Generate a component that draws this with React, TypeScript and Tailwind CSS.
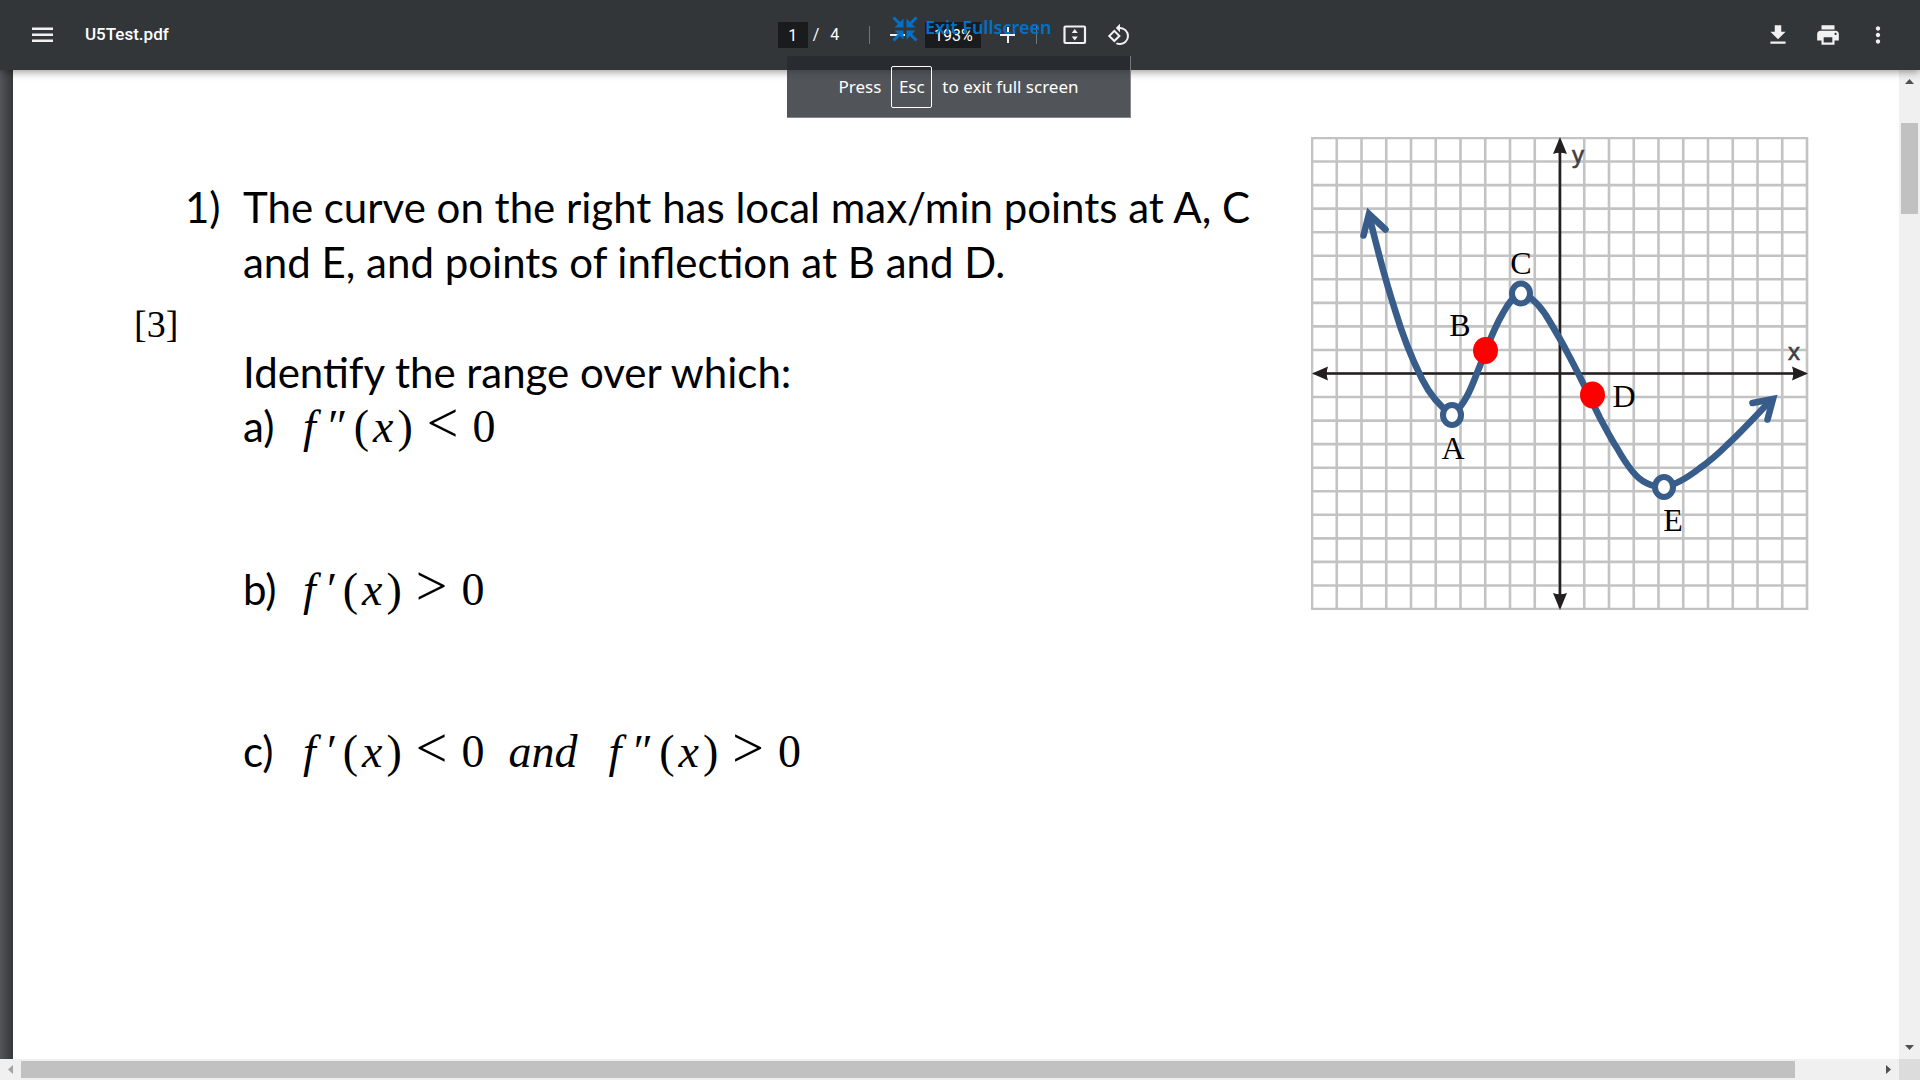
import React from 'react';

const icon = 'flex size-8 shrink-0 items-center justify-center text-[#f1f1f1]';
const math = "inline-block font-['Liberation_Serif',serif] text-[46px] leading-none";
const label = 'inline-block w-[60px]';

function Derivative({ order }: { order: 1 | 2 }) {
  return (
    <>
      <i>f</i>
      <i className={order === 1 ? 'inline-block w-[27px] text-center' : 'inline-block w-[38px] text-center'}>
        {order === 1 ? '′' : '″'}
      </i>
      (<i className="mx-1">x</i>)
    </>
  );
}

function Compare({ sign }: { sign: string }) {
  return (
    <>
      <span className="mx-[14px] text-[56px] leading-[46px]">{sign}</span>0
    </>
  );
}

function Graph() {
  const vs = Array.from({ length: 21 }, (_, i) => 1 + i * 24.75);
  const hs = Array.from({ length: 21 }, (_, i) => 1 + i * 23.55);
  const blue = '#385d8a';
  return (
    <svg viewBox="0 0 498 473" className="h-[473px] w-[498px] shrink-0" role="img" aria-label="Curve with points A to E">
      <g stroke="#c3c3c3" strokeWidth="2.6" fill="none">
        {vs.map((x) => <path key={x} d={`M${x} 0V473`} />)}
        {hs.map((y) => <path key={y} d={`M0 ${y}H497`} />)}
      </g>
      <path d="M249 8V465M8 236.500H490" stroke="#231f20" strokeWidth="2.600" />
      <path d="M249 0l7 17q-7-2.500-14 0zM249 473l7-17q-7 2.500-14 0zM1 236.500l16-7q-2.500 7 0 14zM497 236.500l-16-7q2.500 7 0 14z" fill="#231f20" />
      <g stroke={blue} strokeWidth="6.600" fill="none" strokeLinecap="round">
        <path d="M59 82C67 115 75 145 84 173C92 200 101 222 111 242C119 258 128 269 141 278C153 269 160 252 166 236C169 229 172 221 175 213C180 200 185 188 192 176C198 165 204 158 210 156C222 160 231 171 239 185C245 195 251 205 256 215C262 226 267 236 272 246C278 258 283 269 289 281C295 292 300 302 306 311C311 320 317 329 322 335C330 345 340 350 353 350C365 348 378 339.500 389 331C399 324 407 317 416 308C431 294 444 280 458 265" />
        <path d="M52.500 98.500L58 77L74.500 92.500" strokeMiterlimit="10" />
        <path d="M441.500 266L462 262L456.500 282.500" strokeMiterlimit="10" />
      </g>
      <g fill="#fff" stroke={blue} strokeWidth="6">
        <ellipse cx="141" cy="278" rx="9" ry="10" />
        <ellipse cx="210" cy="156.500" rx="9" ry="10" />
        <ellipse cx="353" cy="350" rx="9" ry="10" />
      </g>
      <g fill="#f00">
        <ellipse cx="174.500" cy="213.500" rx="12.500" ry="13.500" />
        <ellipse cx="281.500" cy="258" rx="12.500" ry="13.500" />
      </g>
      <g className="font-['Liberation_Serif',serif] text-[32px]" textAnchor="middle" fill="#000">
        <text x="142" y="322">A</text>
        <text x="149" y="199">B</text>
        <text x="210" y="137">C</text>
        <text x="313" y="270">D</text>
        <text x="362" y="394">E</text>
      </g>
      <g className="font-['Liberation_Sans',sans-serif] text-[24px]" textAnchor="middle" fill="#414042" stroke="#414042" strokeWidth="0.600">
        <text x="267" y="26">y</text>
        <text x="483" y="223">x</text>
      </g>
    </svg>
  );
}

export default function App() {
  return (
    <div className="flex h-screen flex-col overflow-hidden bg-white font-['Roboto',sans-serif]">
      <header className="relative z-10 grid h-[70px] shrink-0 grid-cols-[1fr_auto_1fr] items-center bg-[#323639] text-white shadow-[0_2px_8px_rgba(0,0,0,0.4)]">
        <div className="flex items-center gap-[26px] pl-[27px]">
          <button aria-label="Menu" className={icon}>
            <svg viewBox="0 0 22 16" className="h-4 w-[22px]" fill="currentColor"><path d="M0 .5h21v2.500H0zM0 6.500h21V9H0zM0 12.500h21V15H0z" /></svg>
          </button>
          <h1 className="text-[17px] font-medium">U5Test.pdf</h1>
        </div>
        <div className="flex items-center pr-[7px] text-base">
          <input aria-label="Page" defaultValue="1" className="h-[26px] w-[30px] bg-[#191b1c] text-center" />
          <span className="ml-[5px]">/</span>
          <span className="ml-[11px]">4</span>
          <span className="ml-[30px] h-[18px] w-px bg-[#70777b]" />
          <button aria-label="Zoom out" className={`${icon} ml-3`}>
            <svg viewBox="0 0 16 16" className="size-4" fill="currentColor"><path d="M0 7h15v2H0z" /></svg>
          </button>
          <input aria-label="Zoom" defaultValue="193%" className="ml-[11px] h-[26px] w-14 bg-[#191b1c] text-center" />
          <button aria-label="Zoom in" className={`${icon} ml-[11px]`}>
            <svg viewBox="0 0 16 16" className="size-4" fill="currentColor"><path d="M0 7h7V0h2v7h6v2H9v7H7V9H0z" /></svg>
          </button>
          <span className="ml-3 h-[18px] w-px bg-[#70777b]" />
          <button aria-label="Fit to page" className={`${icon} ml-[22px]`}>
            <svg viewBox="0 0 24 20" className="h-5 w-6" fill="none"><rect x="1.500" y="1.500" width="20.500" height="16.500" rx="1" stroke="currentColor" strokeWidth="2.200" /><path d="M11.750 4l3 4h-6zM11.750 15.500l3-4h-6z" fill="currentColor" /></svg>
          </button>
          <button aria-label="Rotate" className={`${icon} ml-3`}>
            <svg viewBox="0 0 24 24" className="size-6" fill="currentColor"><path d="M7.340 6.410L.86 12.900l6.490 6.480 6.490-6.480-6.500-6.490zM3.690 12.900l3.660-3.660L11 12.900l-3.660 3.660-3.650-3.660zm15.670-6.260A8.950 8.950 0 0 0 13 4V.76L8.760 5 13 9.240V6c1.790 0 3.580.68 4.950 2.050a7.007 7.007 0 0 1 0 9.900 6.973 6.973 0 0 1-7.790 1.440l-1.490 1.490C10.020 21.620 11.510 22 13 22c2.300 0 4.610-.88 6.360-2.640a8.980 8.980 0 0 0 0-12.720z" /></svg>
          </button>
        </div>
        <div className="flex items-center justify-end gap-[18px] pr-[26px]">
          <button aria-label="Download" className={icon}>
            <svg viewBox="0 0 24 24" className="size-[26px]" fill="currentColor"><path d="M19 9h-4V3H9v6H5l7 7 7-7zM5 18v2h14v-2H5z" /></svg>
          </button>
          <button aria-label="Print" className={icon}>
            <svg viewBox="0 0 24 24" className="size-[26px]" fill="currentColor"><path d="M19 8H5c-1.660 0-3 1.340-3 3v6h4v4h12v-4h4v-6c0-1.660-1.340-3-3-3zm-3 11H8v-5h8v5zm3-7c-.55 0-1-.45-1-1s.45-1 1-1 1 .45 1 1-.45 1-1 1zm-1-9H6v4h12V3z" /></svg>
          </button>
          <button aria-label="More" className={icon}>
            <svg viewBox="0 0 24 24" className="size-[26px]" fill="currentColor"><path d="M12 8c1.100 0 2-.9 2-2s-.9-2-2-2-2 .9-2 2 .9 2 2 2zm0 2c-1.100 0-2 .9-2 2s.9 2 2 2 2-.9 2-2-.9-2-2-2zm0 6c-1.100 0-2 .9-2 2s.9 2 2 2 2-.9 2-2-.9-2-2-2z" /></svg>
          </button>
        </div>
      </header>

      <div className="flex min-h-0 flex-1">
        <div className="w-[13px] shrink-0 bg-linear-to-r from-[#525659] to-[#35383a]" />
        <main className="flex min-w-0 flex-1 items-start justify-between overflow-hidden pr-[90px] font-['Lato',sans-serif] text-[42px] leading-[55px] text-black">
          <div className="grid grid-cols-[51px_58px_auto] pt-[110px] pl-[121px]">
            <p className="col-start-2">1)</p>
            <p className="whitespace-nowrap">The curve on the right has local max/min points at A, C<br />and E, and points of inflection at B and D.</p>
            <p className="col-span-3 h-[55px] pt-[7px] font-['Liberation_Serif',serif] text-[38px]">[3]</p>
            <div className="col-start-3 whitespace-nowrap">
              <p className="h-[54px]">Identify the range over which:</p>
              <p className="h-[54px]"><span className={label}>a)</span><span className={math}><Derivative order={2} /><Compare sign="<" /></span></p>
              <p className="mt-[109px] h-[55px]"><span className={label}>b)</span><span className={math}><Derivative order={1} /><Compare sign=">" /></span></p>
              <p className="mt-[107px]"><span className={label}>c)</span><span className={math}><Derivative order={1} /><Compare sign="<" /><i className="mr-[31px] ml-[24px]">and</i><Derivative order={2} /><Compare sign=">" /></span></p>
            </div>
          </div>
          <div className="pt-[67px]"><Graph /></div>
        </main>
        <div className="flex w-[21px] shrink-0 flex-col items-center bg-[#f0f0f0] pt-[9px] pb-[9px]">
          <svg viewBox="0 0 9 5" className="h-[5px] w-[9px]" fill="#505050"><path d="M0 5L4.500 0 9 5z" /></svg>
          <div className="mt-[39px] h-[91px] w-[17px] bg-[#c1c1c1]" />
          <svg viewBox="0 0 9 5" className="mt-auto h-[5px] w-[9px]" fill="#505050"><path d="M0 0h9L4.500 5z" /></svg>
        </div>
      </div>
      <div className="flex h-[21px] shrink-0 items-center bg-[#f0f0f0]">
        <svg viewBox="0 0 5 9" className="ml-2 h-[9px] w-[5px]" fill="#a3a3a3"><path d="M5 0v9L0 4.500z" /></svg>
        <div className="ml-2 h-[17px] flex-1 bg-[#c1c1c1]" />
        <svg viewBox="0 0 5 9" className="mr-2 ml-[91px] h-[9px] w-[5px]" fill="#505050"><path d="M0 0v9l5-4.500z" /></svg>
        <div className="h-full w-[21px] bg-[#dcdcdc]" />
      </div>

      <div className="absolute top-[56px] left-[787px] z-20 flex h-[62px] w-[344px] items-center justify-center border-r border-b border-[#a8aaac]/60 bg-[#26292e]/80 font-['Noto_Sans',sans-serif] text-[17px] text-white">
        Press<kbd className="mx-[10px] flex h-[42px] w-[41px] items-center justify-center rounded-xs border border-white font-['Noto_Sans',sans-serif]">Esc</kbd>to exit full screen
      </div>
      <button className="absolute top-[14px] left-[892px] z-20 flex items-start gap-[7px] text-[#0070c9]">
        <svg viewBox="0 0 26 26" className="mt-[2px] size-[26px]" fill="currentColor" stroke="currentColor"><path d="M11.500 2.500v9H2.500zM14.500 2.500v9h9zM11.500 23.500v-9H2.500zM14.500 23.500v-9h9z" stroke="none" /><path d="M1.500 1.500l8 8M24.500 1.500l-8 8M1.500 24.500l8-8M24.500 24.500l-8-8" strokeWidth="3" /></svg>
        <span className="font-['Noto_Sans',sans-serif] text-lg leading-[26px] font-semibold">Exit Fullscreen</span>
      </button>
    </div>
  );
}
